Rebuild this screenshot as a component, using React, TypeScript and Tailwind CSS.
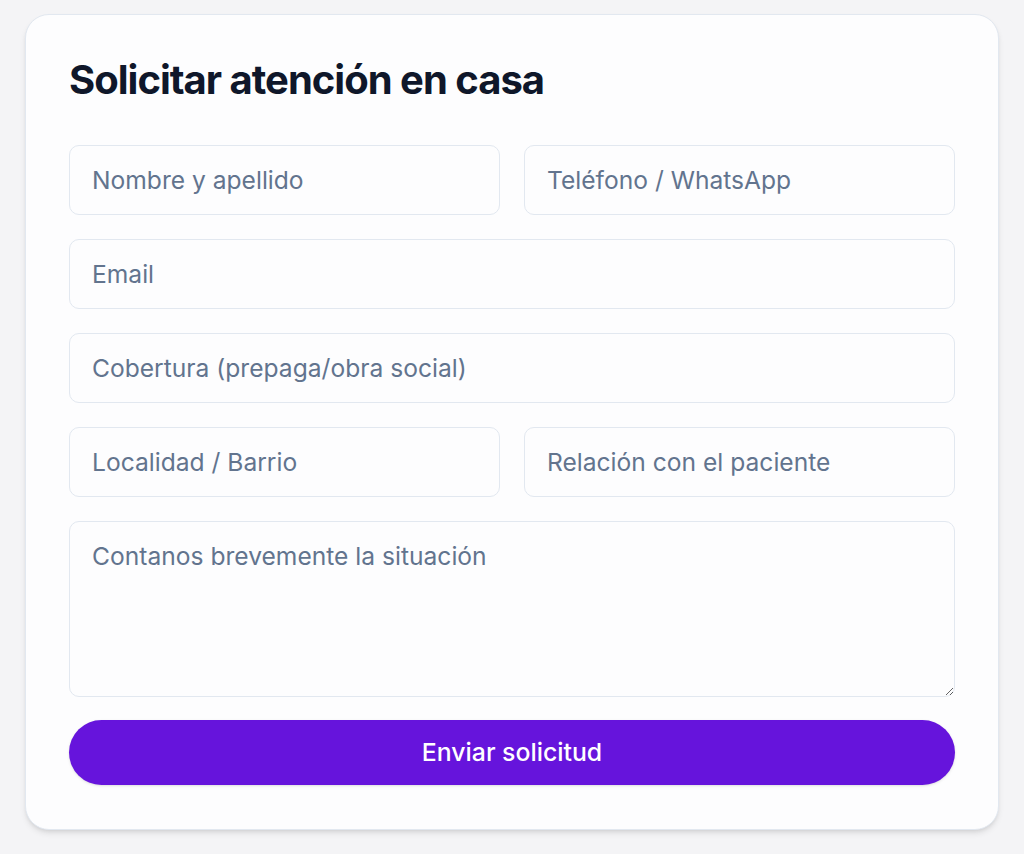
import React from "react";

const inputClass =
  "w-full h-[70px] rounded-[10px] border border-slate-200 bg-[#fdfdfe] px-[22px] text-[24.6px] text-slate-900 placeholder:text-slate-500 outline-none";

export default function App() {
  return (
    <div className="min-h-[854px] bg-[#f4f4f6] pt-[14px] px-[25px] font-['Inter',sans-serif]">
      <div className="rounded-[24px] border border-slate-200 bg-[#fdfdfe] px-[43px] pt-[43px] pb-[44px] shadow-md">
        <h1 className="-mt-[2px] text-[40px] font-bold tracking-tight text-[#0f172a] leading-[48px]">
          Solicitar atención en casa
        </h1>
        <form className="mt-[41px] flex flex-col gap-6" onSubmit={(e) => e.preventDefault()}>
          <div className="grid grid-cols-2 gap-6">
            <input className={inputClass} placeholder="Nombre y apellido" />
            <input className={inputClass} placeholder="Teléfono / WhatsApp" />
          </div>
          <input className={inputClass} placeholder="Email" />
          <input className={inputClass} placeholder="Cobertura (prepaga/obra social)" />
          <div className="grid grid-cols-2 gap-6">
            <input className={inputClass} placeholder="Localidad / Barrio" />
            <input className={inputClass} placeholder="Relación con el paciente" />
          </div>
          <textarea
            className="w-full h-[176px] rounded-[10px] border border-slate-200 bg-[#fdfdfe] px-[22px] py-4 text-[24.6px] text-slate-900 placeholder:text-slate-500 outline-none"
            placeholder="Contanos brevemente la situación"
          />
          <button
            type="submit"
            className="-mt-[1px] h-[65px] w-full rounded-full bg-[#6614dc] text-[24.8px] font-medium text-white shadow-sm"
          >
            Enviar solicitud
          </button>
        </form>
      </div>
    </div>
  );
}
